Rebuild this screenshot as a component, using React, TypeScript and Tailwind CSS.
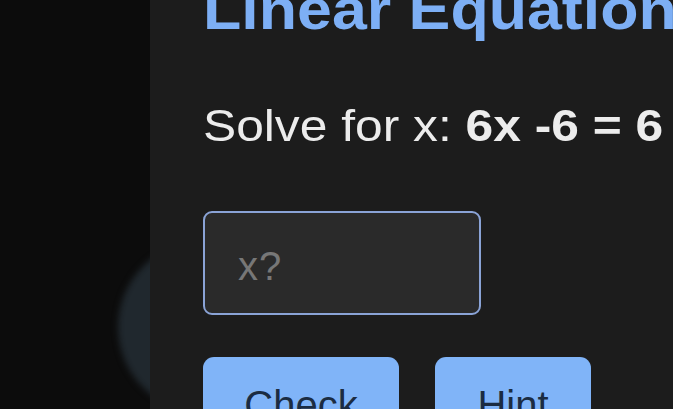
import { useState } from 'react'

export default function App() {
  const [answer, setAnswer] = useState('')

  return (
    <div
      className="relative flex h-[409px] w-[673px] overflow-hidden bg-[#0c0c0c]"
      style={{ fontFamily: '"Liberation Sans", Arial, sans-serif' }}
    >
      {/* blurred blob behind the card */}
      <div className="absolute left-[118px] top-[241px] h-[172px] w-[172px] rounded-full bg-[#20282e] blur-[3px]" />

      <div className="w-[150px] shrink-0" />

      <div className="relative z-10 flex min-w-0 flex-1 flex-col bg-[#1c1c1c] pl-[53px]">
        <h1 className="mt-[-22px] whitespace-nowrap text-[57px] font-bold leading-[62px] text-[#7daff5]">
          <span className="inline-block origin-left scale-x-[1.1]">Linear Equation</span>
        </h1>

        <p className="mt-[60px] whitespace-nowrap text-[44px] leading-[52px] text-[#ececec]">
          <span className="inline-block origin-left scale-x-[1.13]">
            Solve for x: <span className="font-bold">6x -6 = 6</span>
          </span>
        </p>

        <input
          value={answer}
          onChange={(e) => setAnswer(e.target.value)}
          placeholder="x?"
          className="mt-[59px] h-[104px] w-[278px] shrink-0 rounded-[9px] border-2 border-[#8aa3d6] bg-[#2a2a2a] pl-[33px] pt-[7px] text-[40px] tracking-[1px] text-[#e5e5e5] outline-none placeholder:text-[#777777]"
        />

        <div className="mt-[42px] flex shrink-0 gap-[36px]">
          <button className="h-[95px] w-[196px] rounded-[11px] bg-[#80b4f8] text-[40px] text-[#1b2c42]">
            Check
          </button>
          <button className="h-[95px] w-[156px] rounded-[11px] bg-[#80b4f8] text-[40px] text-[#1b2c42]">
            Hint
          </button>
        </div>
      </div>
    </div>
  )
}
